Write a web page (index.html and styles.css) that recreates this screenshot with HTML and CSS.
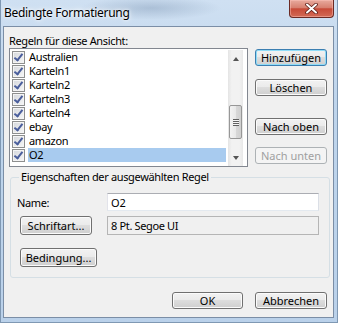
FILE: index.html
```html
<!DOCTYPE html>
<html lang="de">
<head>
  <meta charset="UTF-8">
  <meta name="viewport" content="width=device-width, initial-scale=1.0">
  <title>Bedingte Formatierung</title>
  <link rel="stylesheet" href="styles.css">
</head>
<body>
  <div class="window">
    <div class="titlebar">
      <span class="title">Bedingte Formatierung</span>
      <button class="close" aria-label="Schließen">
        <svg width="13" height="11" viewBox="0 0 13 11">
          <path d="M2 1.5 L11 9.5 M11 1.5 L2 9.5" stroke="#5a1c16" stroke-width="3.6" stroke-linecap="round"/>
          <path d="M2 1.5 L11 9.5 M11 1.5 L2 9.5" stroke="#fff" stroke-width="2" stroke-linecap="round"/>
        </svg>
      </button>
    </div>

    <div class="client">
      <div class="rules">
        <div class="rules-left">
          <label class="caption">Regeln für diese Ansicht:</label>
          <div class="listbox">
            <ul class="items">
              <li class="item"><span class="check"></span><span class="item-text">Australien</span></li>
              <li class="item"><span class="check"></span><span class="item-text">Karteln1</span></li>
              <li class="item"><span class="check"></span><span class="item-text">Karteln2</span></li>
              <li class="item"><span class="check"></span><span class="item-text">Karteln3</span></li>
              <li class="item"><span class="check"></span><span class="item-text">Karteln4</span></li>
              <li class="item"><span class="check"></span><span class="item-text">ebay</span></li>
              <li class="item"><span class="check"></span><span class="item-text">amazon</span></li>
              <li class="item selected"><span class="check"></span><span class="item-text">O2</span></li>
            </ul>
            <div class="scrollbar">
              <div class="arrow up"></div>
              <div class="track"><div class="thumb"></div></div>
              <div class="arrow down"></div>
            </div>
          </div>
        </div>

        <div class="rules-buttons">
          <button class="btn default">Hinzufügen</button>
          <button class="btn btn-delete">Löschen</button>
          <button class="btn btn-up">Nach oben</button>
          <button class="btn btn-down" disabled>Nach unten</button>
        </div>
      </div>

      <fieldset class="props">
        <legend>Eigenschaften der ausgewählten Regel</legend>
        <div class="prop-row name-row">
          <label for="rule-name" class="prop-label">Name:</label>
          <input type="text" id="rule-name" class="name-input" value="O2">
        </div>
        <div class="prop-row font-row">
          <button class="btn btn-font">Schriftart...</button>
          <div class="font-field">8 Pt. Segoe UI</div>
        </div>
        <button class="btn btn-condition">Bedingung...</button>
      </fieldset>

      <div class="footer">
        <button class="btn btn-ok">OK</button>
        <button class="btn btn-cancel">Abbrechen</button>
      </div>
    </div>
  </div>
</body>
</html>
```

FILE: styles.css
```css
body {
  margin: 0;
  font-family: "Noto Sans", "Segoe UI", sans-serif;
  font-size: 11px;
  letter-spacing: -0.35px;
  color: #000;
}
.window {
  width: 338px;
  height: 323px;
  box-sizing: border-box;
  display: flex;
  flex-direction: column;
  overflow: hidden;
  border: 1px solid #7f98b3;
  border-top: none;
  background:
    radial-gradient(ellipse 70px 12px at 150px 8px, rgba(120, 145, 175, 0.4), transparent),
    linear-gradient(180deg, #cfe0f2 0%, #bfd5ec 30%, #bad1ea 100%);
}
.titlebar {
  height: 26px;
  display: flex;
  justify-content: space-between;
  align-items: flex-start;
}
.title {
  padding: 6px 0 0 3px;
  font-size: 12px;
  line-height: 14px;
  letter-spacing: -0.3px;
  text-shadow: 0 0 6px #fff, 0 0 3px #fff;
}
.close {
  width: 45px;
  height: 18px;
  margin: 0 3px 0 0;
  padding: 0;
  display: flex;
  align-items: center;
  justify-content: center;
  border: 1px solid #6b2a24;
  border-top: none;
  border-radius: 0 0 4px 4px;
  background: linear-gradient(180deg, #e8aa9e 0%, #d78070 45%, #c74a38 52%, #d26a55 100%);
  box-shadow: inset 0 0 0 1px rgba(255, 200, 190, 0.45);
}
.client {
  flex: 1;
  margin: 0 3px 4px 2px;
  border: 1px solid #7b8ea6;
  background: #f0f0f0;
  padding-top: 7px;
}
.rules {
  display: flex;
  padding-left: 5px;
  gap: 7px;
}
.caption {
  display: block;
  height: 14px;
  line-height: 14px;
}
.listbox {
  width: 239px;
  height: 119px;
  box-sizing: border-box;
  display: flex;
  padding: 1px 4px 0 0;
  border: 1px solid #828790;
  background: #fff;
}
.items {
  width: 216px;
  margin: 0;
  padding: 0;
  list-style: none;
}
.item {
  display: flex;
  align-items: center;
  height: 14px;
}
.check {
  position: relative;
  width: 13px;
  height: 13px;
  box-sizing: border-box;
  margin: 0 3px 0 2px;
  border: 1px solid #8e8f8f;
  background: linear-gradient(135deg, #d4d7dc 0%, #f7f7f7 100%);
  box-shadow: inset 0 0 0 1px #f4f4f4;
}
.check::after {
  content: "";
  position: absolute;
  left: 3px;
  top: 0;
  width: 3px;
  height: 7px;
  border: solid #4a5e9c;
  border-width: 0 2px 2px 0;
  transform: rotate(38deg);
}
.item-text {
  flex: 1;
  padding-left: 1px;
  line-height: 14px;
}
.selected .item-text {
  background: #a8cbef;
}
.scrollbar {
  width: 15px;
  height: 116px;
  margin-left: 2px;
  display: flex;
  flex-direction: column;
  background: linear-gradient(90deg, #e4e4e4 0%, #f2f2f2 25%, #f2f2f2 75%, #e8e8e8 100%);
}
.arrow {
  height: 17px;
  display: flex;
  align-items: center;
  justify-content: center;
}
.arrow::before {
  content: "";
  border-left: 3.5px solid transparent;
  border-right: 3.5px solid transparent;
}
.arrow.up::before {
  border-bottom: 4px solid #555;
}
.arrow.down::before {
  border-top: 4px solid #555;
}
.track {
  flex: 1;
  padding: 38px 1px 0;
}
.thumb {
  height: 34px;
  box-sizing: border-box;
  display: flex;
  align-items: center;
  justify-content: center;
  border: 1px solid #979797;
  border-radius: 2px;
  background: linear-gradient(90deg, #f3f3f3 0%, #e9e9e9 50%, #d9d9d9 51%, #d0d0d0 100%);
}
.thumb::after {
  content: "";
  width: 6px;
  height: 7px;
  background: repeating-linear-gradient(180deg, #616161 0 1px, #f6f6f6 1px 2px);
}
.rules-buttons {
  width: 72px;
  display: flex;
  flex-direction: column;
  padding-top: 15px;
}
.btn {
  height: 17px;
  padding: 0;
  font: inherit;
  line-height: 15px;
  color: #000;
  border: 1px solid #707070;
  border-radius: 3px;
  background: linear-gradient(180deg, #f2f2f2 0%, #ebebeb 45%, #dddddd 50%, #cfcfcf 100%);
  box-shadow: inset 0 0 0 1px #fbfbfb;
}
.btn.default {
  border-color: #3c7fb1;
  box-shadow: inset 0 0 0 1px #8fdcf7;
}
.btn:disabled {
  color: #a0a0a0;
  border-color: #adb2b5;
  background: #f4f4f4;
  box-shadow: none;
}
.btn-delete {
  margin-top: 13px;
}
.btn-up {
  margin-top: 22px;
}
.btn-down {
  margin-top: 12px;
}
.props {
  height: 108px;
  box-sizing: border-box;
  margin: 3px 3px 0 6px;
  padding: 0 0 0 6px;
  border: 1px solid #d5dfe5;
  border-radius: 3px;
}
.props legend {
  margin-left: 2px;
  padding: 0 2px;
  line-height: 14px;
}
.prop-row {
  display: flex;
  align-items: center;
}
.name-row {
  margin-top: 9px;
}
.prop-label {
  width: 90px;
}
.name-input {
  width: 212px;
  height: 18px;
  box-sizing: border-box;
  margin: 0;
  padding: 0 3px;
  font: inherit;
  border: 1px solid #abadb3;
  border-color: #abadb3 #dbdfe6 #e3e9ef #e2e3ea;
  background: #fff;
}
.font-row {
  margin-top: 5px;
}
.btn-font {
  width: 72px;
  height: 19px;
  margin-left: 3px;
}
.font-field {
  width: 212px;
  height: 19px;
  box-sizing: border-box;
  margin-left: 15px;
  padding: 0 3px;
  line-height: 17px;
  border: 1px solid #b5b5b5;
  background: #f0f0f0;
}
.btn-condition {
  display: block;
  width: 77px;
  height: 19px;
  margin: 13px 0 0 3px;
}
.footer {
  display: flex;
  justify-content: flex-end;
  gap: 12px;
  padding: 14px 6px 0 0;
}
.btn-ok {
  width: 71px;
}
.btn-cancel {
  width: 72px;
}
```
